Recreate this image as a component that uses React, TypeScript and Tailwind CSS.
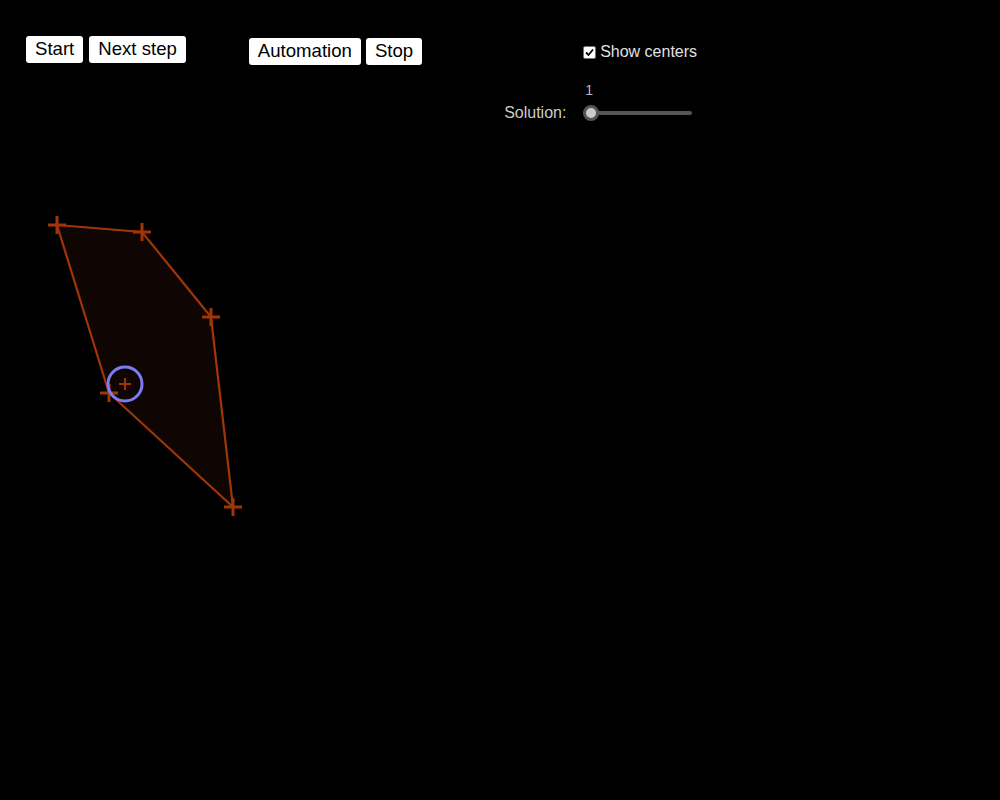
export default function App() {
  const pts: [number, number][] = [[57,225],[142,232],[211,317],[233,507],[109,393]];
  const btn = "bg-white text-black rounded-[3px] h-[27px] px-[9px] text-[18.6px] leading-none flex items-center";
  const cross = (x: number, y: number, s: number, k: string) => (
    <g key={k}>
      <line x1={x - s} y1={y} x2={x + s} y2={y} />
      <line x1={x} y1={y - s} x2={x} y2={y + s} />
    </g>
  );
  return (
    <div className="relative w-[1000px] h-[800px] bg-black overflow-hidden" style={{ fontFamily: '"Liberation Sans", Arial, sans-serif' }}>
      <svg className="absolute left-0 top-0" width={1000} height={800}>
        <polygon points={pts.map(p => p.join(",")).join(" ")} fill="#0f0502" stroke="#a03508" strokeWidth={2.2} />
        <g stroke="#a03508" strokeWidth={3}>
          {pts.map((p, i) => cross(p[0], p[1], 9, "p" + i))}
        </g>
        <circle cx={125} cy={384} r={17} fill="none" stroke="#7b7bf5" strokeWidth={3} />
        <g stroke="#a03508" strokeWidth={2}>{cross(125, 384, 6, "c")}</g>
      </svg>
      <div className="relative flex items-start">
        <div className="flex gap-[6px] ml-[26px] mt-[36px]">
          <div className={btn}>Start</div>
          <div className={btn}>Next step</div>
        </div>
        <div className="flex gap-[5px] ml-[63px] mt-[38px]">
          <div className={btn}>Automation</div>
          <div className={btn}>Stop</div>
        </div>
        <div className="ml-[82px] mt-[43px] flex flex-col">
          <div className="flex items-center ml-[79px] h-[18px]">
            <div className="w-[13px] h-[13px] bg-white rounded-[2px] border border-gray-500 flex items-center justify-center">
              <svg width="11" height="11" viewBox="0 0 11 11"><path d="M2 5.5 L4.5 8 L9 2.5" stroke="#000" strokeWidth="1.8" fill="none" /></svg>
            </div>
            <span className="ml-[4px] text-[16px] text-[#e0e0e0]">Show centers</span>
          </div>
          <div className="ml-[79px] mt-[22px] text-[14px] text-[#bbb] leading-none pl-[2px]">1</div>
          <div className="flex items-center mt-[4px]">
            <span className="text-[16px] text-[#ccc] w-[62px]">Solution:</span>
            <div className="relative ml-[17px] w-[109px] h-[18px] flex items-center">
              <div className="w-full h-[4px] rounded bg-[#555]" />
              <div className="absolute left-0 top-[1px] w-[16px] h-[16px] rounded-full bg-[#ccc] border-[3px] border-[#555]" />
            </div>
          </div>
        </div>
      </div>
    </div>
  );
}
